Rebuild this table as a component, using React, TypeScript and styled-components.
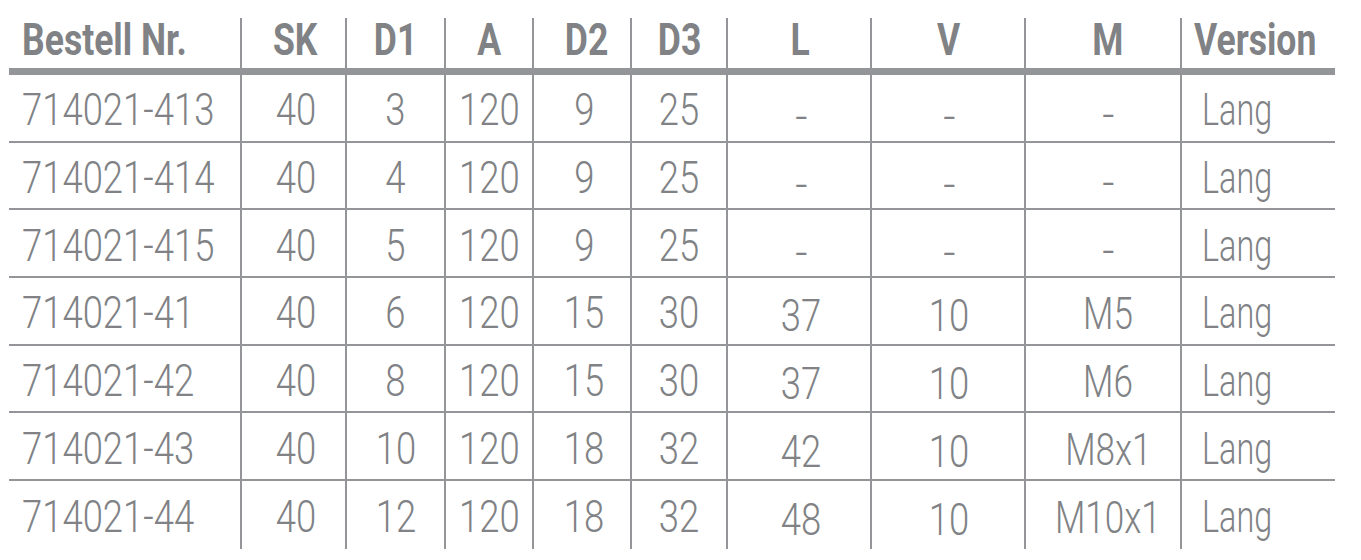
import React from "react";
import styled, { createGlobalStyle } from "styled-components";

const GlobalStyle = createGlobalStyle`
  html, body {
    margin: 0;
    padding: 0;
    background: #ffffff;
  }
  body {
    font-family: Roboto, "Liberation Sans", Arial, sans-serif;
  }
`;

const LINE = "#939598";
const INK = "#808285";

type Align = "left" | "center";

interface Column {
  key: string;
  label: string;
  width: number;
  align: Align;
  headNudge: number;
  nudge: number;
  drop: number;
  squeeze: number;
}

const columns: Column[] = [
  { key: "nr", label: "Bestell Nr.", width: 231, align: "left", headNudge: 13, nudge: 13, drop: 0, squeeze: 0.81 },
  { key: "sk", label: "SK", width: 105, align: "center", headNudge: 2, nudge: 2, drop: 0, squeeze: 0.81 },
  { key: "d1", label: "D1", width: 99, align: "center", headNudge: 0, nudge: 0, drop: 0, squeeze: 0.81 },
  { key: "a", label: "A", width: 88, align: "center", headNudge: 0, nudge: 0, drop: 0, squeeze: 0.81 },
  { key: "d2", label: "D2", width: 98, align: "center", headNudge: 5, nudge: 2, drop: 0, squeeze: 0.81 },
  { key: "d3", label: "D3", width: 96, align: "center", headNudge: 1, nudge: 0, drop: 0, squeeze: 0.81 },
  { key: "l", label: "L", width: 144, align: "center", headNudge: 1, nudge: 2, drop: 3, squeeze: 0.81 },
  { key: "v", label: "V", width: 154, align: "center", headNudge: 1, nudge: 1, drop: 3, squeeze: 0.81 },
  { key: "m", label: "M", width: 156, align: "center", headNudge: 5, nudge: 5, drop: 1, squeeze: 0.78 },
  { key: "ver", label: "Version", width: 155, align: "left", headNudge: 12, nudge: 20, drop: 0, squeeze: 0.72 },
];

const rows: string[][] = [
  ["714021-413", "40", "3", "120", "9", "25", "-", "-", "-", "Lang"],
  ["714021-414", "40", "4", "120", "9", "25", "-", "-", "-", "Lang"],
  ["714021-415", "40", "5", "120", "9", "25", "-", "-", "-", "Lang"],
  ["714021-41", "40", "6", "120", "15", "30", "37", "10", "M5", "Lang"],
  ["714021-42", "40", "8", "120", "15", "30", "37", "10", "M6", "Lang"],
  ["714021-43", "40", "10", "120", "18", "32", "42", "10", "M8x1", "Lang"],
  ["714021-44", "40", "12", "120", "18", "32", "48", "10", "M10x1", "Lang"],
];

const template = columns.map((c) => `${c.width}px`).join(" ");

const Table = styled.div`
  margin: 18px 0 0 9px;
  width: 1326px;
`;

const HeaderRow = styled.div`
  display: grid;
  grid-template-columns: ${template};
  height: 57px;
  border-bottom: 7px solid ${LINE};
  box-sizing: border-box;
`;

const BodyRow = styled.div`
  display: grid;
  grid-template-columns: ${template};
  height: 67.7px;
  box-sizing: border-box;
  border-bottom: 2px solid ${LINE};
  &:last-child {
    border-bottom: none;
  }
`;

const Cell = styled.div<{ $align: Align; $nudge: number; $drop: number; $first: boolean }>`
  display: flex;
  align-items: center;
  justify-content: ${(p) => (p.$align === "left" ? "flex-start" : "center")};
  padding-left: ${(p) => (p.$align === "left" ? p.$nudge : p.$nudge * 2)}px;
  padding-top: ${(p) => p.$drop * 2}px;
  border-left: ${(p) => (p.$first ? "none" : `2px solid ${LINE}`)};
  box-sizing: border-box;
  min-width: 0;
`;

const HeadText = styled.span<{ $align: Align }>`
  display: inline-block;
  font-family: Roboto, "Liberation Sans", Arial, sans-serif;
  font-weight: 700;
  font-size: 45px;
  line-height: 1;
  color: ${INK};
  white-space: nowrap;
  transform: scaleX(0.79);
  transform-origin: ${(p) => (p.$align === "left" ? "left center" : "center center")};
  margin-top: -8px;
`;

const BodyText = styled.span<{ $align: Align; $dash: boolean; $squeeze: number }>`
  display: inline-block;
  font-family: Roboto, "Liberation Sans", Arial, sans-serif;
  font-weight: 300;
  font-size: 45px;
  line-height: 1;
  color: ${INK};
  white-space: nowrap;
  transform: scaleX(${(p) => (p.$dash ? 0.95 : p.$squeeze)});
  transform-origin: ${(p) => (p.$align === "left" ? "left center" : "center center")};
  margin-top: ${(p) => (p.$dash ? 12 : 4)}px;
`;

export default function App() {
  return (
    <>
      <GlobalStyle />
      <Table>
        <HeaderRow>
          {columns.map((c, i) => (
            <Cell key={c.key} $align={c.align} $nudge={c.headNudge} $drop={0} $first={i === 0}>
              <HeadText $align={c.align}>{c.label}</HeadText>
            </Cell>
          ))}
        </HeaderRow>
        {rows.map((r) => (
          <BodyRow key={r[0]}>
            {r.map((v, i) => {
              const c = columns[i];
              return (
                <Cell key={c.key} $align={c.align} $nudge={c.nudge} $drop={c.drop} $first={i === 0}>
                  <BodyText $align={c.align} $dash={v === "-"} $squeeze={c.squeeze}>
                    {v}
                  </BodyText>
                </Cell>
              );
            })}
          </BodyRow>
        ))}
      </Table>
    </>
  );
}
